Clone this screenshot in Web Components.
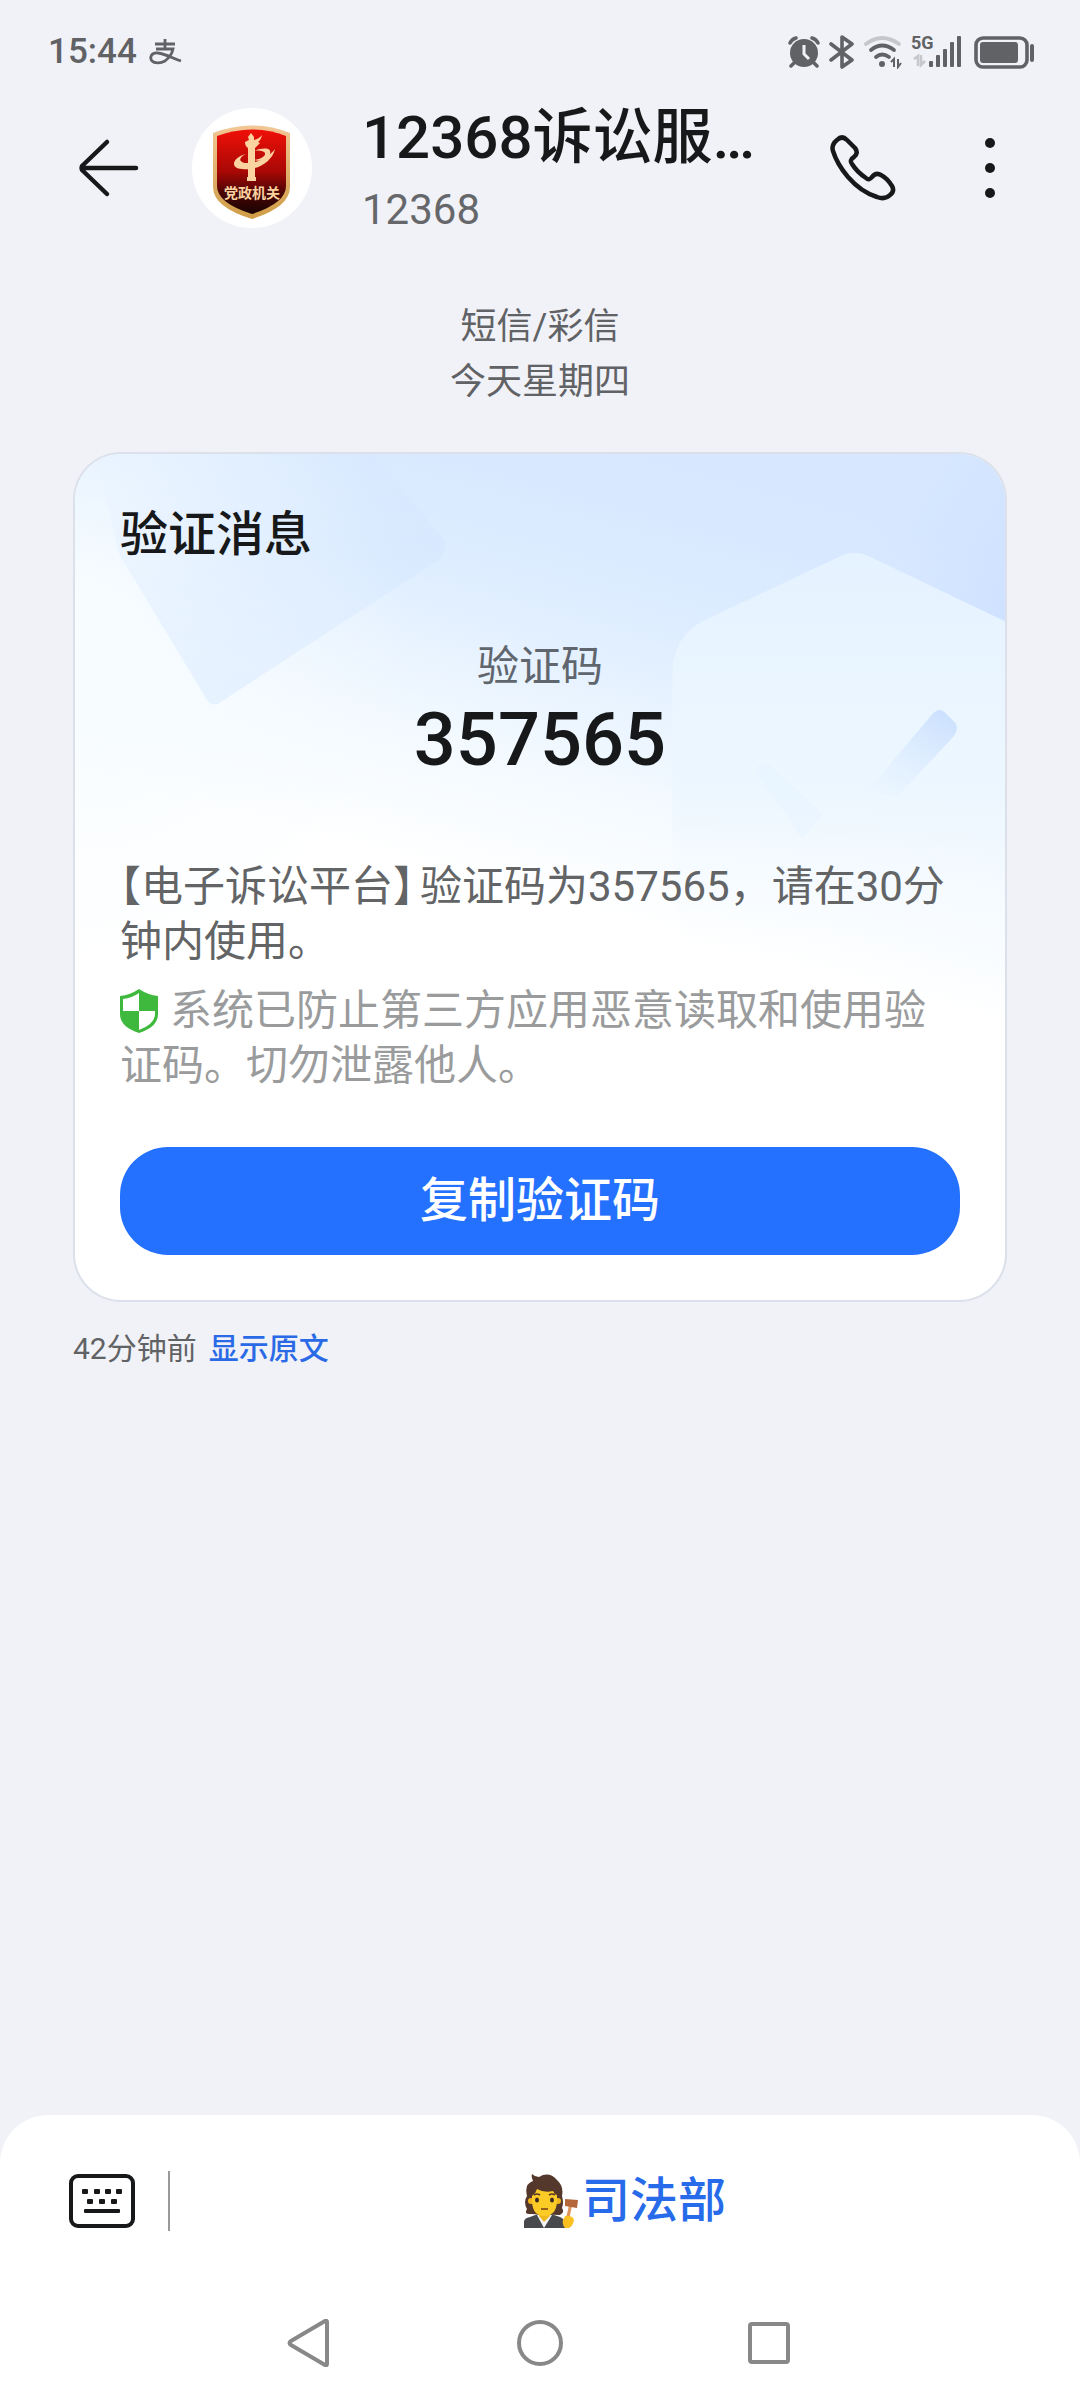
<!DOCTYPE html>
<html lang="zh-CN">
<head>
<meta charset="utf-8">
<meta name="viewport" content="width=device-width, initial-scale=1">
<title>12368</title>
<style>
    body {
        margin: 0;
        background: #f1f2f7;
        color: #17181a;
        font-family: Roboto, "Noto Sans CJK SC", sans-serif;
    }
    .sender {
        margin-right: 6px;
        font-feature-settings: "halt";
    }
</style>
</head>
<body>
<sms-screen>
    <status-bar slot="top" time="15:44"></status-bar>
    <chat-header slot="top" number="12368">12368诉讼服…</chat-header>

    <thread-info>
        <span>短信/彩信</span>
        <span>今天星期四</span>
    </thread-info>
    <code-card heading="验证消息" label="验证码" code="357565">
        <span class="sender">【电子诉讼平台】</span>验证码为357565，请在30分钟内使用。
        <span slot="notice">系统已防止第三方应用恶意读取和使用验证码。切勿泄露他人。</span>
        <span slot="action">复制验证码</span>
    </code-card>
    <message-meta time="42分钟前">显示原文</message-meta>

    <quick-menu slot="bottom">司法部</quick-menu>
    <nav-keys slot="bottom"></nav-keys>
</sms-screen>

<script>
class BaseElement extends HTMLElement {
    constructor() {
        super();
        this.attachShadow({ mode: 'open' });
    }

    connectedCallback() {
        this.shadowRoot.innerHTML = `
            <style>
                * { box-sizing: border-box; }
                svg { display: block; flex: none; }
                button {
                    margin: 0;
                    padding: 0;
                    border: 0;
                    background: none;
                    color: inherit;
                    font: inherit;
                    cursor: pointer;
                }
            </style>
            ${this.render()}
        `;
    }
}

class SmsScreen extends BaseElement {
    render() {
        return `
            <style>
                :host {
                    display: flex;
                    flex-direction: column;
                    min-height: 100vh;
                }
                main {
                    flex: 1;
                    padding: 60px 73px 40px;
                }
                footer {
                    background: #fff;
                    border-radius: 48px 48px 0 0;
                    padding: 56px 0 33px;
                }
            </style>
            <header><slot name="top"></slot></header>
            <main><slot></slot></main>
            <footer><slot name="bottom"></slot></footer>
        `;
    }
}

class StatusBar extends BaseElement {
    render() {
        return `
            <style>
                :host {
                    display: flex;
                    align-items: center;
                    justify-content: space-between;
                    padding: 30px 44px 22px 48px;
                    color: #616265;
                    font-size: 35px;
                    font-weight: 500;
                    line-height: 44px;
                }
                .side {
                    display: flex;
                    align-items: center;
                    gap: 9px;
                }
                .left { gap: 12px; }
            </style>
            <div class="side left">
                <time>${this.getAttribute('time')}</time>
                <svg width="34" height="26" viewBox="0 0 34 26" fill="none" stroke="currentColor" stroke-width="2.8">
                    <path d="M6 5h20M16 0v10M7 10h17c-1 5-4 9-8 12-4 2-10 3-13 0-3-4 0-9 6-8 8 1 14 5 23 8" />
                </svg>
            </div>
            <div class="side">
                <svg width="32" height="32" viewBox="0 0 32 32" fill="currentColor">
                    <circle cx="16" cy="17" r="14" />
                    <g fill="none" stroke="currentColor" stroke-width="3.5" stroke-linecap="round">
                        <path d="M2 7q2-4 6-5M30 7q-2-4-6-5M6 27l-3 3M26 27l3 3" />
                    </g>
                    <path d="M16 9v9l5 5" fill="none" stroke="#f1f2f7" stroke-width="3" />
                </svg>
                <svg width="26" height="34" viewBox="0 0 26 34" fill="none" stroke="currentColor" stroke-width="3.6" stroke-linecap="round" stroke-linejoin="round">
                    <path d="M2 9l21 16-10 7V2l10 7L2 25" />
                </svg>
                <svg width="38" height="34" viewBox="0 0 38 34" fill="none" stroke="currentColor" stroke-width="3.8" stroke-linecap="round">
                    <path d="M2 9Q18-3 35 9" stroke="#c6c7ca" />
                    <path d="M7 15q11-9 23 0M12 22q6-5 13 0" />
                    <circle cx="18" cy="29" r="3" fill="currentColor" stroke="none" />
                    <path d="M27 27l3-3v8M34 24v8l3-4" stroke-width="2" stroke-linecap="butt" />
                </svg>
                <svg width="54" height="44" viewBox="0 -5 54 44" fill="currentColor">
                    <text x="0" y="14" font-size="18" font-weight="700">5G</text>
                    <path d="M3 24l4-3v10M10 20v10l4-4" fill="none" stroke="#c6c7ca" stroke-width="2.5" />
                    <rect x="18" y="26" width="4" height="6" rx="1" />
                    <rect x="25" y="20" width="4" height="12" rx="1" />
                    <rect x="32" y="14" width="4" height="18" rx="1" />
                    <rect x="39" y="7" width="4" height="25" rx="1" />
                    <rect x="46" y="1" width="4" height="31" rx="1" />
                </svg>
                <svg width="62" height="34" viewBox="0 0 62 34" fill="currentColor">
                    <rect x="2" y="3" width="51" height="29" rx="7" fill="none" stroke="currentColor" stroke-width="3.6" />
                    <rect x="6" y="7" width="38" height="21" rx="3" />
                    <rect x="56" y="9" width="4" height="18" rx="2" />
                </svg>
            </div>
        `;
    }
}

class ChatHeader extends BaseElement {
    render() {
        return `
            <style>
                :host {
                    display: flex;
                    align-items: center;
                    padding: 0 78px 0 76px;
                }
                .avatar {
                    margin: 0 50px;
                }
                .names {
                    flex: 1;
                    min-width: 0;
                }
                h1, p {
                    margin: 0;
                    overflow: hidden;
                    white-space: nowrap;
                    text-overflow: ellipsis;
                }
                h1 {
                    font-size: 60px;
                    font-weight: 500;
                    line-height: 84px;
                }
                p {
                    color: #66676a;
                    font-size: 42px;
                    line-height: 60px;
                }
                .call {
                    margin: 0 82px 0 48px;
                }
            </style>
            <button aria-label="返回">
                <svg width="66" height="60" viewBox="0 0 66 60" fill="none" stroke="currentColor" stroke-width="4.5" stroke-linecap="round" stroke-linejoin="round">
                    <path d="M60 30H6M31 4L6 28q-1 2 0 4l25 24" />
                </svg>
            </button>
            <svg class="avatar" width="120" height="120" viewBox="0 0 120 120">
                <defs>
                    <linearGradient id="red" x2="0" y2="1">
                        <stop offset="0" stop-color="#f01008" />
                        <stop offset=".5" stop-color="#a80805" />
                        <stop offset=".75" stop-color="#4a0604" />
                        <stop offset="1" stop-color="#180302" />
                    </linearGradient>
                    <linearGradient id="gold" x2="0" y2="1">
                        <stop offset="0" stop-color="#f2c795" />
                        <stop offset="1" stop-color="#cf9c45" />
                    </linearGradient>
                </defs>
                <circle cx="60" cy="60" r="60" fill="#fff" />
                <path d="M21 25Q60 10 98 25V79Q98 99 60 111 21 99 21 79Z" fill="url(#gold)" />
                <path d="M25 28Q60 15 94 28V78Q94 95 60 106 25 95 25 78Z" fill="url(#red)" />
                <g fill="#fbd3a0">
                    <path d="M53 34l4-2-1-3 3-4 3 4v3q5-1 8-5-1 5-4 7l2 1-5 5v29h1v4H55v-4h1V40q-3-2-3-6z" />
                    <path d="M54 46C41 49 37 60 50 61c15 2 30-7 33-20-6 8-18 15-30 14-7-1-6-6 1-9z" />
                    <path d="M62 43c10-4 18-3 16 3-2 5-10 8-16 6 7-1 12-4 11-7-1-2-6-3-11-2z" />
                    <text x="60" y="90" text-anchor="middle" font-size="14" font-weight="700">党政机关</text>
                </g>
            </svg>
            <div class="names">
                <h1><slot></slot></h1>
                <p>${this.getAttribute('number')}</p>
            </div>
            <button class="call" aria-label="拨打电话">
                <svg width="66" height="66" viewBox="0 0 66 66" fill="none" stroke="currentColor" stroke-width="4.5" stroke-linejoin="round">
                    <path d="M7 5Q12 0 17 5L25 13Q29 18 24 22 19 25 22 29 27 37 36 43 39 46 42 42 46 37 51 40 57 43 62 51 65 56 60 60 55 65 47 62 31 57 18 42 7 29 3 16 1 10 7 5Z" />
                </svg>
            </button>
            <button aria-label="更多">
                <svg width="24" height="60" viewBox="0 0 24 60" fill="currentColor">
                    <circle cx="12" cy="5" r="5" />
                    <circle cx="12" cy="30" r="5" />
                    <circle cx="12" cy="55" r="5" />
                </svg>
            </button>
        `;
    }
}

class ThreadInfo extends BaseElement {
    render() {
        return `
            <style>
                :host {
                    display: flex;
                    flex-direction: column;
                    align-items: center;
                    margin-bottom: 42px;
                    color: #616265;
                    font-size: 36px;
                    line-height: 55px;
                }
            </style>
            <slot></slot>
        `;
    }
}

class CodeCard extends BaseElement {
    render() {
        return `
            <style>
                :host {
                    display: block;
                    position: relative;
                    overflow: hidden;
                    padding: 49px 45px 45px;
                    border: 2px solid rgba(120, 145, 180, .18);
                    border-radius: 48px;
                    background: #fff;
                    background-clip: padding-box;
                }
                /* decoration behind the content */
                .art {
                    position: absolute;
                    top: 0;
                    left: 0;
                    width: 100%;
                    height: auto;
                }
                .content {
                    position: relative;
                    display: flex;
                    flex-direction: column;
                }
                h2, p { margin: 0; }
                h2 {
                    font-size: 48px;
                    font-weight: 500;
                    line-height: 64px;
                    margin-bottom: 72px;
                }
                .label, .code { text-align: center; }
                .label {
                    color: #60666e;
                    font-size: 42px;
                    line-height: 56px;
                }
                .code {
                    font-size: 74px;
                    font-weight: 500;
                    line-height: 90px;
                    margin-bottom: 74px;
                }
                .text, .notice {
                    font-size: 42px;
                    line-height: 55px;
                }
                .text {
                    color: #626466;
                    margin-bottom: 14px;
                }
                .notice {
                    color: #9a9b9c;
                    margin-bottom: 54px;
                }
                .notice svg {
                    display: inline-block;
                    vertical-align: -8px;
                    margin-right: 10px;
                }
                button {
                    padding: 22px;
                    border-radius: 48px;
                    background: #2470ff;
                    color: #fff;
                    font-size: 48px;
                    font-weight: 500;
                    line-height: 64px;
                }
            </style>
            <svg class="art" viewBox="0 0 934 600" aria-hidden="true">
                <defs>
                    <linearGradient id="sky" gradientUnits="userSpaceOnUse" x1="560" y1="0" x2="440" y2="440">
                        <stop offset="0" stop-color="#d6e7ff" />
                        <stop offset=".35" stop-color="#deedff" />
                        <stop offset=".7" stop-color="#f2f9ff" />
                        <stop offset="1" stop-color="#fff" />
                    </linearGradient>
                    <radialGradient id="edge" gradientUnits="userSpaceOnUse" cx="0" cy="180" r="340">
                        <stop offset="0" stop-color="#f8fdff" />
                        <stop offset="1" stop-color="#f4faff" stop-opacity="0" />
                    </radialGradient>
                    <linearGradient id="quad" x1=".1" y1="0" x2=".3" y2="1">
                        <stop offset="0" stop-color="#cfe2ff" stop-opacity="0" />
                        <stop offset=".5" stop-color="#cde2ff" stop-opacity=".5" />
                        <stop offset="1" stop-color="#d3e6ff" stop-opacity=".8" />
                    </linearGradient>
                    <linearGradient id="hex" x2="0" y2="1">
                        <stop offset="0" stop-color="#e5f2ff" />
                        <stop offset=".5" stop-color="#edf7ff" />
                        <stop offset=".9" stop-color="#fff" stop-opacity="0" />
                    </linearGradient>
                    <linearGradient id="corner" gradientUnits="userSpaceOnUse" x1="934" y1="150" x2="780" y2="60">
                        <stop offset="0" stop-color="#cbdfff" stop-opacity=".7" />
                        <stop offset="1" stop-color="#d6e7ff" stop-opacity="0" />
                    </linearGradient>
                    <linearGradient id="tick" x1=".8" y1="0" x2=".2" y2="1">
                        <stop offset="0" stop-color="#cce1fe" />
                        <stop offset="1" stop-color="#e8f4ff" stop-opacity=".5" />
                    </linearGradient>
                </defs>
                <rect width="934" height="600" fill="url(#sky)" />
                <rect width="934" height="600" fill="url(#edge)" />
                <rect x="700" width="234" height="200" fill="url(#corner)" />
                <path d="M44 100L20 0H300L366 80Q378 94 366 106L148 248Q138 256 132 246Z" fill="url(#quad)" opacity=".55" />
                <path d="M766 104Q783 95 800 104L934 168V580H640Q600 480 600 390V220Q600 185 630 168Z" fill="url(#hex)" />
                <path d="M862 260Q869 254 874 260L884 270Q888 277 882 284L830 340Q824 345 818 343L797 337Z" fill="url(#tick)" />
                <path d="M684 318Q690 306 700 314L752 362 730 386Z" fill="#e3f1ff" opacity=".35" />
            </svg>
            <div class="content">
                <h2>${this.getAttribute('heading')}</h2>
                <p class="label">${this.getAttribute('label')}</p>
                <p class="code">${this.getAttribute('code')}</p>
                <p class="text"><slot></slot></p>
                <p class="notice"><svg width="40" height="44" viewBox="0 0 40 44">
                    <path d="M19 0q9 6 19 7v18q0 13-19 19Q0 38 0 25V7Q10 6 19 0z" fill="#3fb93d" />
                    <path d="M19 4v18H3V10q9-1 16-6zM19 22h16v3q0 10-16 16z" fill="#fff" />
                </svg><slot name="notice"></slot></p>
                <button><slot name="action"></slot></button>
            </div>
        `;
    }
}

class MessageMeta extends BaseElement {
    render() {
        return `
            <style>
                :host {
                    display: flex;
                    gap: 12px;
                    margin-top: 27px;
                    color: #616265;
                    font-size: 30px;
                    line-height: 40px;
                }
                a {
                    color: #2b6ae6;
                    font-weight: 500;
                    text-decoration: none;
                }
            </style>
            <span>${this.getAttribute('time')}</span>
            <a href="#"><slot></slot></a>
        `;
    }
}

class QuickMenu extends BaseElement {
    render() {
        return `
            <style>
                :host {
                    display: flex;
                    align-items: center;
                    margin-bottom: 88px;
                }
                .keyboard {
                    padding: 0 33px 0 69px;
                    border-right: 2px solid #98999b;
                }
                .keyboard svg { margin: 3px 0; }
                .item {
                    flex: 1;
                    display: flex;
                    align-items: center;
                    justify-content: center;
                    gap: 4px;
                    color: #276bea;
                    font-size: 48px;
                    font-weight: 500;
                    line-height: 60px;
                }
            </style>
            <button class="keyboard" aria-label="键盘">
                <svg width="66" height="54" viewBox="0 0 66 54" fill="#17181a">
                    <rect x="2" y="2" width="62" height="50" rx="7" fill="none" stroke="#17181a" stroke-width="4" />
                    <rect x="13" y="15" width="6" height="5" rx="1" />
                    <rect x="25" y="15" width="6" height="5" rx="1" />
                    <rect x="36" y="15" width="6" height="5" rx="1" />
                    <rect x="47" y="15" width="6" height="5" rx="1" />
                    <rect x="18" y="25" width="6" height="5" rx="1" />
                    <rect x="30" y="25" width="6" height="5" rx="1" />
                    <rect x="42" y="25" width="6" height="5" rx="1" />
                    <rect x="15" y="35" width="36" height="4" rx="1" />
                </svg>
            </button>
            <button class="item">
                <svg width="54" height="54" viewBox="0 0 54 54">
                    <path d="M5 40Q0 40 3 35-1 28 3 22 0 10 9 7 7 3 8 0 11 3 15 3 25-3 33 6 40 12 38 22 40 29 38 34 41 39 36 41Z" fill="#55382c" />
                    <path d="M0 54V48Q0 44 6 43L14 40H27L36 43Q41 45 41 50V54Z" fill="#48494d" />
                    <path d="M13 41L20 54 28 41Z" fill="#f3f4f6" />
                    <path d="M15 36H26V42L20 48 15 42Z" fill="#efb81e" />
                    <circle cx="7" cy="27" r="3" fill="#f2b51d" />
                    <circle cx="34" cy="27" r="3" fill="#f2b51d" />
                    <path d="M8 22Q12 19 13 15 20 19 29 17 30 20 33 21V28Q32 42 20 42 9 42 8 28Z" fill="#fdcb26" />
                    <path d="M10 21Q13 19 16 21M25 21Q28 19 31 21" fill="none" stroke="#55382c" stroke-width="1.6" />
                    <ellipse cx="13" cy="26" rx="2" ry="2.5" fill="#3b2a23" />
                    <ellipse cx="28" cy="26" rx="2" ry="2.5" fill="#3b2a23" />
                    <path d="M17 35H24" fill="none" stroke="#8c5316" stroke-width="1.8" />
                    <path d="M45 31l3 1-4 18-3-1z" fill="#e09558" />
                    <path d="M41 25l13 1-1 8-12-2z" fill="#b5673c" />
                    <path d="M40 44Q41 41 44 42 49 42 50 46 49 52 45 54H41Q37 49 40 44Z" fill="#fbc021" />
                </svg>
                <slot></slot>
            </button>
        `;
    }
}

class NavKeys extends BaseElement {
    render() {
        return `
            <style>
                :host {
                    display: flex;
                    justify-content: center;
                    gap: 184px;
                }
            </style>
            <button aria-label="后退">
                <svg width="46" height="48" viewBox="0 0 46 48" fill="none" stroke="#888" stroke-width="4" stroke-linejoin="round">
                    <path d="M40 3v42q0 2-2 1L4 26q-3-2 0-4L38 2q2-1 2 1z" />
                </svg>
            </button>
            <button aria-label="主页">
                <svg width="46" height="48" viewBox="0 0 46 48" fill="none" stroke="#888" stroke-width="4">
                    <circle cx="23" cy="24" r="21" />
                </svg>
            </button>
            <button aria-label="最近任务">
                <svg width="46" height="48" viewBox="0 0 46 48" fill="none" stroke="#888" stroke-width="4">
                    <rect x="3" y="5" width="38" height="38" rx="2" />
                </svg>
            </button>
        `;
    }
}

customElements.define('sms-screen', SmsScreen);
customElements.define('status-bar', StatusBar);
customElements.define('chat-header', ChatHeader);
customElements.define('thread-info', ThreadInfo);
customElements.define('code-card', CodeCard);
customElements.define('message-meta', MessageMeta);
customElements.define('quick-menu', QuickMenu);
customElements.define('nav-keys', NavKeys);
</script>
</body>
</html>
